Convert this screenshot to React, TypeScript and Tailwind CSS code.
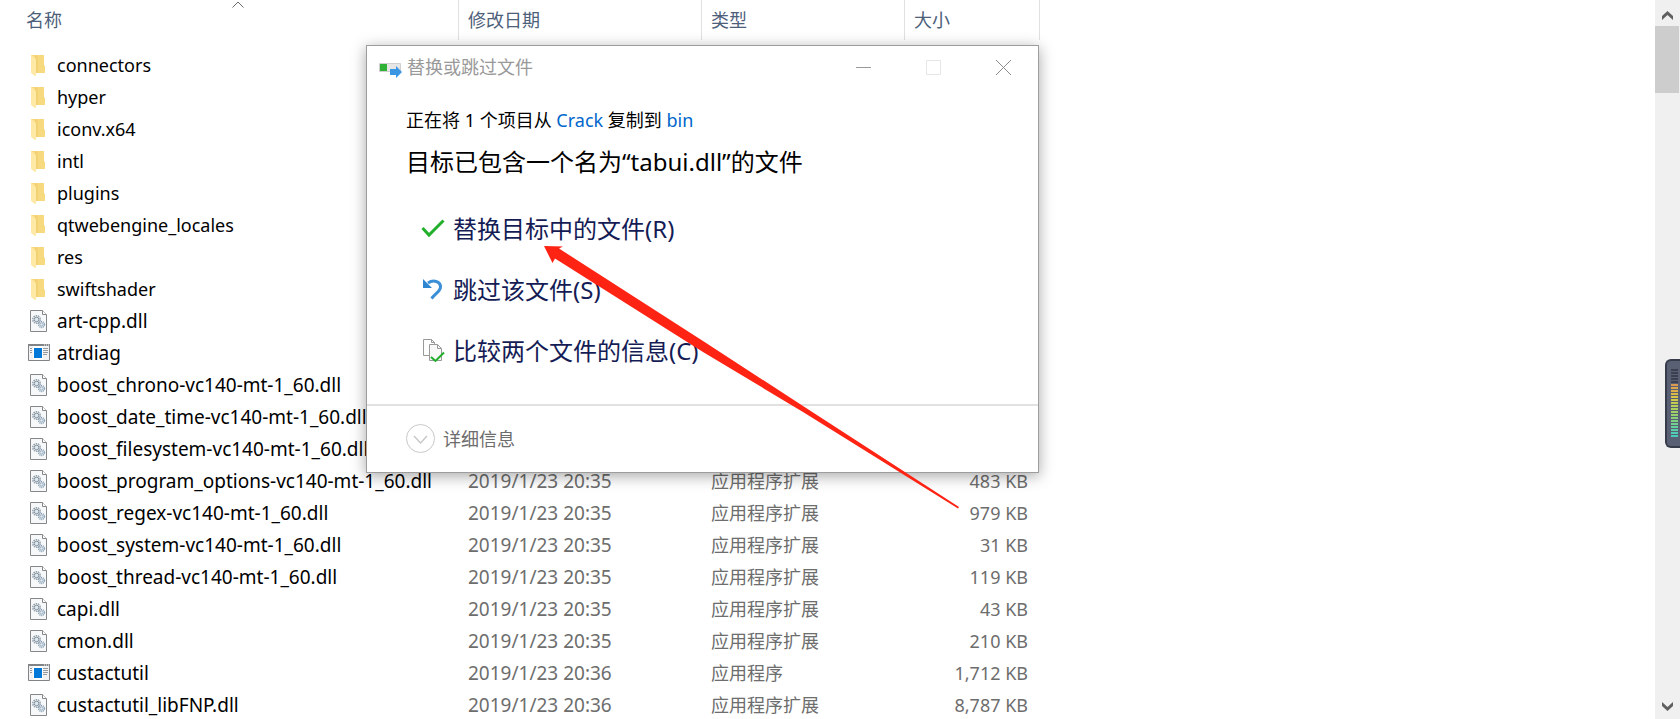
import React from 'react';

type Kind = 'folder' | 'dll' | 'exe';

interface FileRow {
  kind: Kind;
  name: string;
  date: string;
  type: string;
  size?: string;
}

const folder = (name: string): FileRow => ({ kind: 'folder', name, date: '2019/1/23 20:35', type: '文件夹' });
const dll = (name: string, size: string, date = '2019/1/23 20:35'): FileRow => ({ kind: 'dll', name, date, type: '应用程序扩展', size });
const exe = (name: string, size: string, date = '2019/1/23 20:35'): FileRow => ({ kind: 'exe', name, date, type: '应用程序', size });

// rows whose date, type and size sit behind the dialog
const hiddenRows: FileRow[] = [
  folder('connectors'),
  folder('hyper'),
  folder('iconv.x64'),
  folder('intl'),
  folder('plugins'),
  folder('qtwebengine_locales'),
  folder('res'),
  folder('swiftshader'),
  dll('art-cpp.dll', ''),
  exe('atrdiag', ''),
  dll('boost_chrono-vc140-mt-1_60.dll', ''),
  dll('boost_date_time-vc140-mt-1_60.dll', ''),
  dll('boost_filesystem-vc140-mt-1_60.dll', ''),
].map((f) => ({ ...f, date: '', type: '' }));

const files: FileRow[] = [
  ...hiddenRows,
  dll('boost_program_options-vc140-mt-1_60.dll', '483 KB'),
  dll('boost_regex-vc140-mt-1_60.dll', '979 KB'),
  dll('boost_system-vc140-mt-1_60.dll', '31 KB'),
  dll('boost_thread-vc140-mt-1_60.dll', '119 KB'),
  dll('capi.dll', '43 KB'),
  dll('cmon.dll', '210 KB'),
  exe('custactutil', '1,712 KB', '2019/1/23 20:36'),
  dll('custactutil_libFNP.dll', '8,787 KB', '2019/1/23 20:36'),
];

const FolderIcon = () => (
  <svg width="22" height="22" viewBox="0 0 22 22" className="block">
    <path d="M3 1h13v10l1 1v7H3z" fill="#f7da80" />
    <path d="M7 1h3v18H7z" fill="#f3d275" />
    <path d="M3 1l4 3 1 2v16H7l-4-3z" fill="#ffe9a6" />
  </svg>
);

const DllIcon = () => (
  <svg width="22" height="22" viewBox="0 0 22 22" className="block">
    <path d="M2.5.5h12l4 4v17h-16z" fill="#f7f8f9" stroke="#85888b" />
    <path d="M14.5.5v4h4" fill="#fff" stroke="#85888b" />
    <circle cx="8.500" cy="9.500" r="3.700" fill="none" stroke="#8f9eab" strokeWidth="1.500" strokeDasharray="1.500 .8" />
    <circle cx="8.500" cy="9.500" r="2.300" fill="#dde4ea" stroke="#8494a3" />
    <circle cx="13.500" cy="14.500" r="3" fill="none" stroke="#8ea5b8" strokeWidth="1.300" strokeDasharray="1.200 .7" />
    <circle cx="13.500" cy="14.500" r="1.700" fill="#e6eef5" stroke="#8fa6ba" />
  </svg>
);

const ExeIcon = () => (
  <svg width="22" height="18" viewBox="0 0 22 18" className="block">
    <path d="M.5.5h21v16H.5z" fill="#f3f3f3" stroke="#808487" />
    <path d="M0 0h22v2H0z" fill="#808487" />
    <path d="M16 1h1M18 1h1M20 1h1" stroke="#fff" />
    <path d="M5 2h10v14H5z" fill="#fff" />
    <path d="M6 4h8v10H6z" fill="#0078d7" />
    <path d="M2 4.500h2M2 6.500h2M2 8.500h2M15 4.500h5M15 6.500h5M15 8.500h5M15 10.500h4" stroke="#989b9e" />
  </svg>
);

const icons: Record<Kind, React.FC> = { folder: FolderIcon, dll: DllIcon, exe: ExeIcon };

const FileTable = () => (
  <table className="w-[1040px] table-fixed border-separate border-spacing-0 text-lg leading-6">
    <colgroup>
      <col className="w-[459px]" />
      <col className="w-[243px]" />
      <col className="w-[203px]" />
      <col className="w-[135px]" />
    </colgroup>
    <thead>
      <tr className="h-10 text-left text-[#4c607a]">
        <th className="relative border-r border-[#e0e0e0] p-0 pl-[26px] font-normal">
          名称
          <svg width="12" height="7" viewBox="0 0 12 7" className="absolute top-px left-[232px]">
            <path d="M.5 6.500L6 1l5.500 5.500" fill="none" stroke="#6b6b6b" />
          </svg>
        </th>
        <th className="border-r border-[#e0e0e0] p-0 pl-[9px] font-normal">修改日期</th>
        <th className="border-r border-[#e0e0e0] p-0 pl-[9px] font-normal">类型</th>
        <th className="border-r border-[#e0e0e0] p-0 pl-[9px] font-normal">大小</th>
      </tr>
    </thead>
    <tbody className="text-[#6d6d6d] before:block before:h-[9px]">
      {files.map((f) => {
        const Icon = icons[f.kind];
        return (
          <tr key={f.name} className="h-8">
            <td className="p-0 pl-7">
              <div
                className={`flex items-center gap-[7px] whitespace-nowrap text-black ${
                  f.kind === 'folder' ? 'text-[18px]' : 'text-[19px]'
                }`}
              >
                <Icon />
                {f.name}
              </div>
            </td>
            <td className="p-0 pl-[9px] text-[19px]">{f.date}</td>
            <td className="p-0 pl-[9px]">{f.type}</td>
            <td className="p-0 pr-3 text-right">{f.size}</td>
          </tr>
        );
      })}
    </tbody>
  </table>
);

const CopyIcon = () => (
  <svg width="24" height="22" viewBox="0 -7 24 22" className="block">
    <path d="M.5.5h21v8H.5z" fill="#e6e6e6" stroke="#cfcfcf" />
    <path d="M1 1h7v7H1z" fill="#2eb135" />
    <path d="M11 6h6V3l6 6-6 6v-3h-6z" fill="#3a96e3" />
  </svg>
);

const CheckIcon = () => (
  <svg width="24" height="24" viewBox="0 0 24 24" className="block">
    <path d="M1.500 11l6.500 7L22.500 3.500" fill="none" stroke="#22b02c" strokeWidth="3" />
  </svg>
);

const UndoIcon = () => (
  <svg width="24" height="24" viewBox="0 0 24 24" className="block">
    <path d="M7 5c5-3.500 12.500-2 12.500 4 0 4-4 5.500-9 11.500" fill="none" stroke="#3a8fd6" strokeWidth="3" />
    <path d="M2 1v9h9z" fill="#2f86d0" />
  </svg>
);

const CompareIcon = () => (
  <svg width="24" height="24" viewBox="0 0 24 24" className="block">
    <path d="M2.500.5h8l3 3v13h-11z" fill="#fff" stroke="#999" />
    <path d="M10.500.5v3h3" fill="none" stroke="#999" />
    <path d="M8.500 5.500h8l4 4v12h-12z" fill="#f8f8f8" stroke="#999" />
    <path d="M16.500 5.500v4h4" fill="none" stroke="#999" />
    <path d="M10 18l4.500 4 8.500-8.500" fill="none" stroke="#1fae2a" strokeWidth="2" />
  </svg>
);

const commands = [
  { icon: <CheckIcon />, label: '替换目标中的文件(R)' },
  { icon: <UndoIcon />, label: '跳过该文件(S)' },
  { icon: <CompareIcon />, label: '比较两个文件的信息(C)' },
];

const ReplaceDialog = () => (
  <section
    role="dialog"
    aria-labelledby="dialog-title"
    className="absolute top-[45px] left-[366px] w-[673px] border border-[#9d9d9d] bg-white shadow-[0_3px_14px_rgba(0,0,0,0.35)]"
  >
    <header className="flex h-[42px] items-center pl-3">
      <CopyIcon />
      <h1 id="dialog-title" className="ml-1 flex-1 text-lg leading-6 text-[#999999]">替换或跳过文件</h1>
      <button aria-label="最小化" className="flex h-full w-[70px] items-center justify-center">
        <svg width="15" height="15" viewBox="0 0 15 15"><path d="M0 7.500h15" stroke="#999" /></svg>
      </button>
      <button aria-label="最大化" disabled className="flex h-full w-[70px] items-center justify-center">
        <svg width="15" height="15" viewBox="0 0 15 15"><path d="M.5.5h14v14H.5z" fill="none" stroke="#e6e6e6" /></svg>
      </button>
      <button aria-label="关闭" className="flex h-full w-[70px] items-center justify-center">
        <svg width="15" height="15" viewBox="0 0 15 15"><path d="M0 0l15 15M15 0L0 15" stroke="#8a8a8a" /></svg>
      </button>
    </header>

    <div className="px-[39px] pt-5">
      <p className="text-lg leading-6 text-black">
        正在将 1 个项目从 <a href="#crack" className="text-[#0066cc]">Crack</a> 复制到 <a href="#bin" className="text-[#0066cc]">bin</a>
      </p>
      <h2 className="mt-3.5 text-2xl leading-8 text-black">目标已包含一个名为“tabui.dll”的文件</h2>
    </div>

    <ul className="mt-5 mb-[23px] px-[54px] text-2xl text-[#151c55]">
      {commands.map((c) => (
        <li key={c.label}>
          <button className="flex h-[61px] items-center gap-2">
            {c.icon}
            {c.label}
          </button>
        </li>
      ))}
    </ul>

    <footer className="border-t-2 border-[#e1e1e1] px-[39px] pt-[18px] pb-[19px]">
      <button className="flex items-center gap-2 text-lg leading-6 text-[#6d6d6d]">
        <svg width="29" height="29" viewBox="0 0 29 29" fill="none" stroke="#c8c8c8">
          <circle cx="14.500" cy="14.500" r="14" />
          <path d="M8 12l6.500 7 6.500-7" strokeWidth="1.500" />
        </svg>
        详细信息
      </button>
    </footer>
  </section>
);

const RedArrow = () => (
  <svg width="418" height="264" viewBox="0 0 418 264" className="pointer-events-none absolute top-[245px] left-[543px]">
    <path d="M1 1L20 1.500l-4 2L160 96l100 65 156 101-1 1.500L260 167 160 107 12 13.500l-2.500 4.500z" fill="#ff2314" />
  </svg>
);

const meterColors = [
  '#3b4050', '#3b4050', '#3b4050', '#3b4050', '#3b4050',
  '#d99a52', '#dba64c', '#dbb048', '#dbbb46', '#d8c446', '#cfc94a', '#c3cd50', '#b5cf57', '#abd05e',
  '#a0d067', '#95d070', '#8ad07a', '#7ed085', '#72d091', '#66cf9c', '#5acea8', '#50cdb2', '#48ccba',
];

const LevelMeter = () => (
  <div className="absolute top-[359px] right-0 flex h-[89px] w-[15px] flex-col gap-px rounded-l-md border-2 border-r-0 border-[#363c4a] bg-[#596073] pt-2 pl-1">
    {meterColors.map((c, i) => (
      <span key={i} className="h-[2px] w-[7px] shrink-0" style={{ backgroundColor: c }} />
    ))}
  </div>
);

const ScrollBar = () => (
  <aside className="flex w-[25px] shrink-0 flex-col justify-between bg-[#f0f0f0]">
    <div>
      <button aria-label="向上滚动" className="flex h-[26px] w-full items-center justify-center pt-1">
        <svg width="11" height="9" viewBox="0 0 11 9"><path d="M0 5L5.500 0 11 5v4L5.500 4 0 9z" fill="#606060" /></svg>
      </button>
      <div className="h-[67px] w-6 bg-[#cdcdcd]" />
    </div>
    <button aria-label="向下滚动" className="flex h-[26px] w-full items-center justify-center">
      <svg width="11" height="9" viewBox="0 0 11 9"><path d="M0 4l5.500 5L11 4V0L5.500 5 0 0z" fill="#606060" /></svg>
    </button>
  </aside>
);

export default function App() {
  return (
    <div className="relative flex h-screen overflow-hidden bg-white font-['Noto_Sans','Noto_Sans_CJK_SC',sans-serif]">
      <main className="min-w-0 flex-1">
        <FileTable />
      </main>
      <ScrollBar />
      <ReplaceDialog />
      <RedArrow />
      <LevelMeter />
    </div>
  );
}
